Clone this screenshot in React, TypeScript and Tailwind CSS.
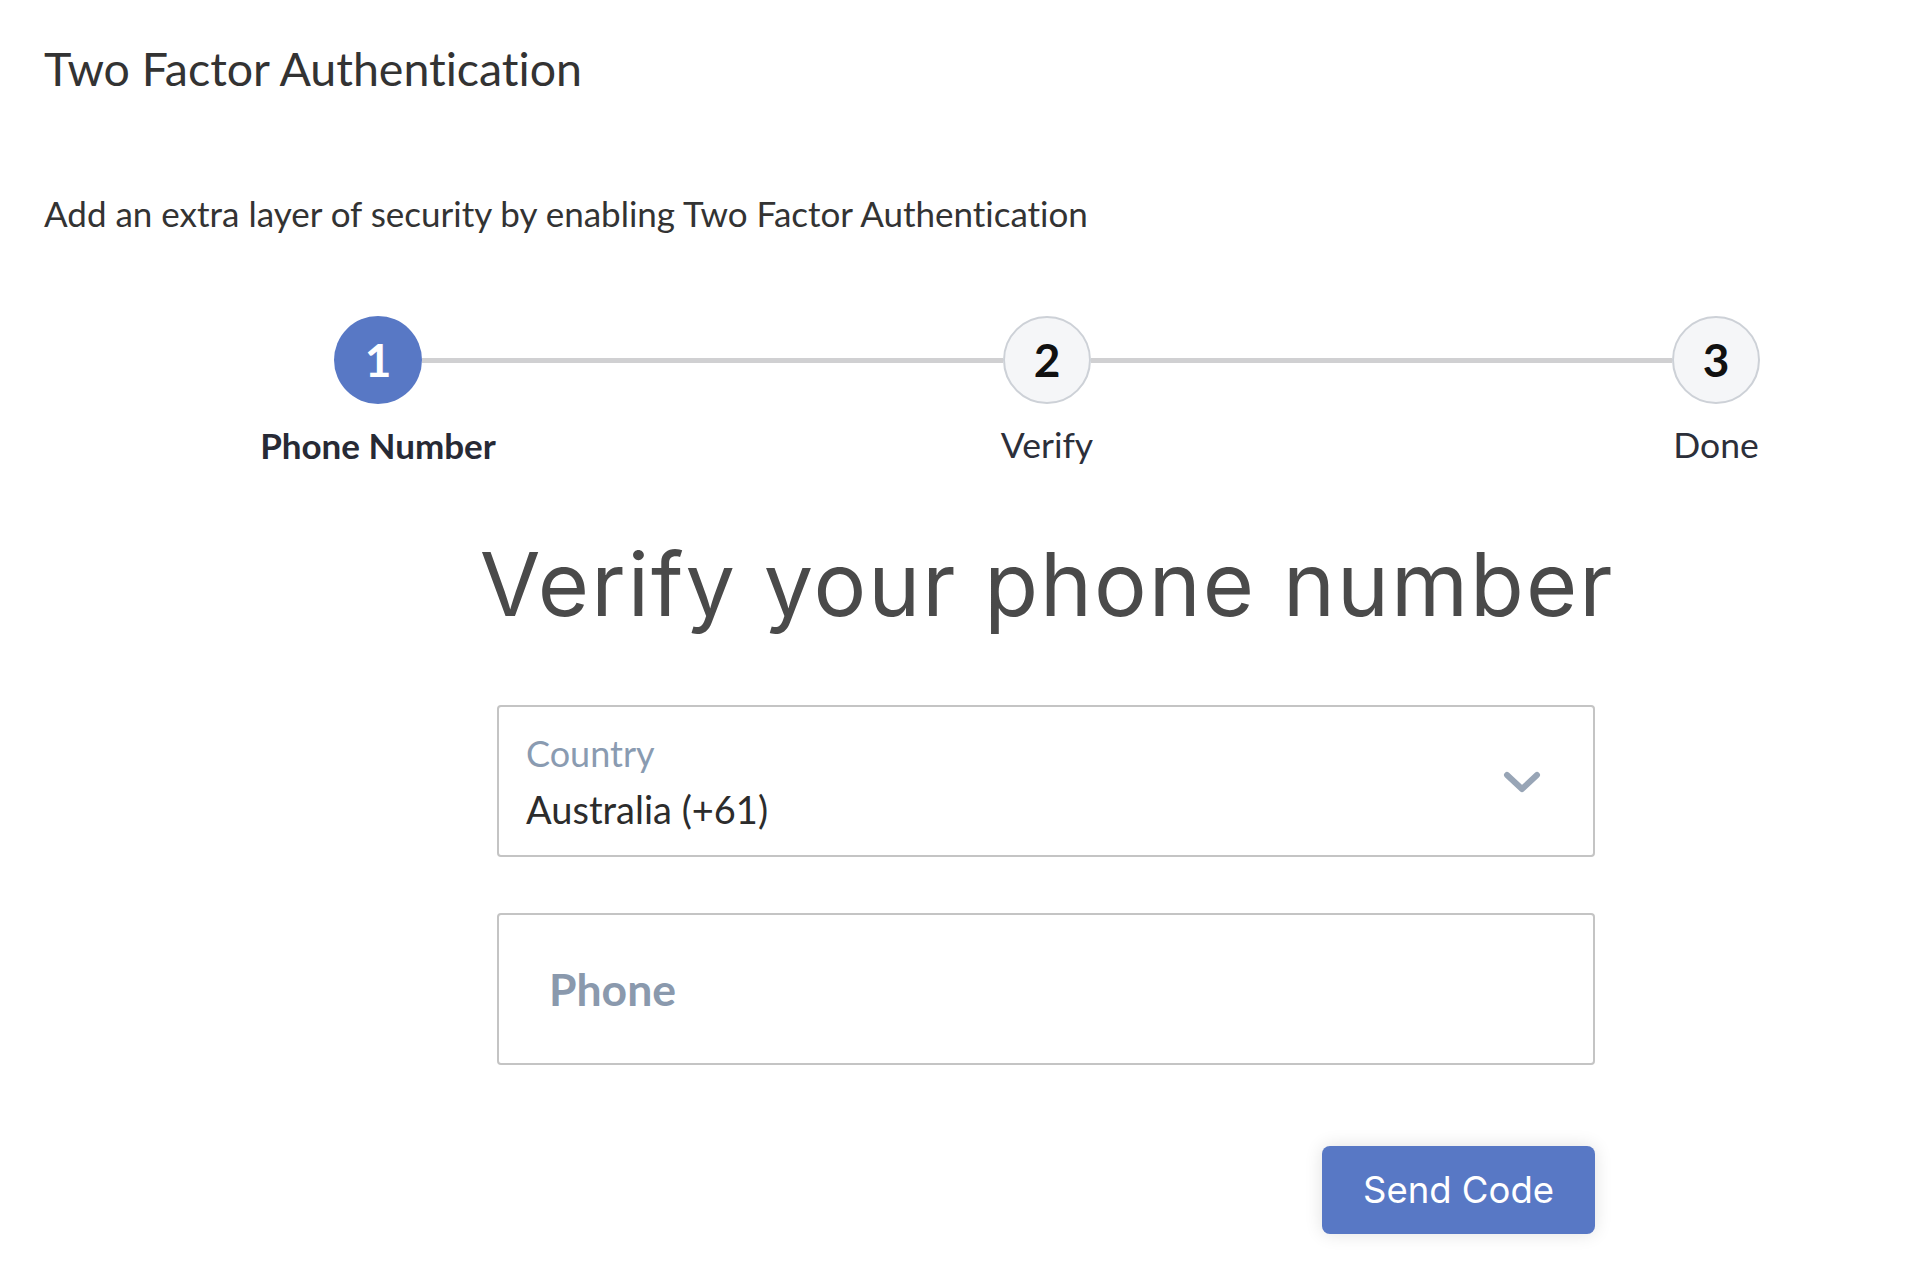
import { useState } from 'react';

// Two Factor Authentication — step 1 (phone number).

const steps = [
  { n: 1, label: 'Phone Number' },
  { n: 2, label: 'Verify' },
  { n: 3, label: 'Done' },
];

function Step({ n, label, active }: { n: number; label: string; active: boolean }) {
  return (
    <div className="flex w-[88px] shrink-0 flex-col items-center">
      <div
        className={
          active
            ? 'flex h-[88px] w-[88px] items-center justify-center rounded-full bg-[#5878c5] text-[46px] font-bold leading-none text-white'
            : 'flex h-[88px] w-[88px] items-center justify-center rounded-full border-2 border-[#cdd1d7] bg-[#f5f6f8] text-[46px] font-bold leading-none text-[#111111]'
        }
      >
        {n}
      </div>
      <div
        className={
          active
            ? 'mt-[20px] whitespace-nowrap text-[35px] font-bold leading-[1.2] text-[#272a35]'
            : 'mt-[20px] whitespace-nowrap text-[35.5px] leading-[1.2] text-[#2c2f3a]'
        }
      >
        {label}
      </div>
    </div>
  );
}

export default function App() {
  const [phone, setPhone] = useState('');

  return (
    <div className="min-h-screen bg-white pl-[44px] pt-[41px] font-['Lato','Liberation_Sans',sans-serif] [font-variant-ligatures:none]">
      <h1 className="text-[46.5px] leading-[1.2] text-[#333333]">Two Factor Authentication</h1>
      <p className="mt-[95px] text-[35px] leading-[1.2] text-[#333333]">
        Add an extra layer of security by enabling Two Factor Authentication
      </p>

      <div className="ml-[290px] w-[1426px]">
        {/* ── Stepper ── */}
        <div className="mt-[82px] flex items-start">
          {steps.map((s, i) => (
            <div key={s.n} className={i === 0 ? 'flex items-start' : 'flex flex-1 items-start'}>
              {i > 0 && <div className="mt-[42px] h-[5px] flex-1 bg-[#d0d0d2]" />}
              <Step n={s.n} label={s.label} active={i === 0} />
            </div>
          ))}
        </div>

        {/* ── Heading ── */}
        <div className="mt-[66px] flex justify-center">
          <h2 className="whitespace-nowrap font-['Inter',sans-serif] text-[88px] leading-[1.2] tracking-[2px] text-[#4a4a4a]">
            Verify your phone number
          </h2>
        </div>

        {/* ── Form ── */}
        <div className="ml-[163px] mt-[67px] w-[1098px]">
          <div className="flex h-[152px] items-center justify-between rounded-[4px] border-2 border-[#c4c4c4] pl-[27px] pr-[52px]">
            <div className="flex flex-col pt-[3px]">
              <span className="text-[36px] leading-[1.2] text-[#8a9bb1]">Country</span>
              <span className="mt-[12px] text-[38px] leading-[1.2] text-[#2c2c2c]">Australia (+61)</span>
            </div>
            <svg className="mt-[4px]" width="38" height="24" viewBox="0 0 38 24" fill="none">
              <path d="M4 4 L19 18 L34 4" stroke="#98a5b6" strokeWidth="6" strokeLinecap="round" strokeLinejoin="round" />
            </svg>
          </div>

          <div className="mt-[56px] flex h-[152px] items-center rounded-[4px] border-2 border-[#c4c4c4] pl-[50px] pr-[28px]">
            <input
              value={phone}
              onChange={(e) => setPhone(e.target.value)}
              placeholder="Phone"
              className="w-full bg-transparent text-[44.5px] font-bold text-[#2c2c2c] outline-none placeholder:text-[#8a99ad]"
            />
          </div>

          <div className="mt-[81px] flex justify-end">
            <button className="h-[88px] w-[273px] rounded-[8px] bg-[#5878c5] font-['Inter',sans-serif] text-[36.5px] text-white shadow-[0_0_18px_rgba(0,0,0,0.12)]">
              Send Code
            </button>
          </div>
        </div>
      </div>
    </div>
  );
}
